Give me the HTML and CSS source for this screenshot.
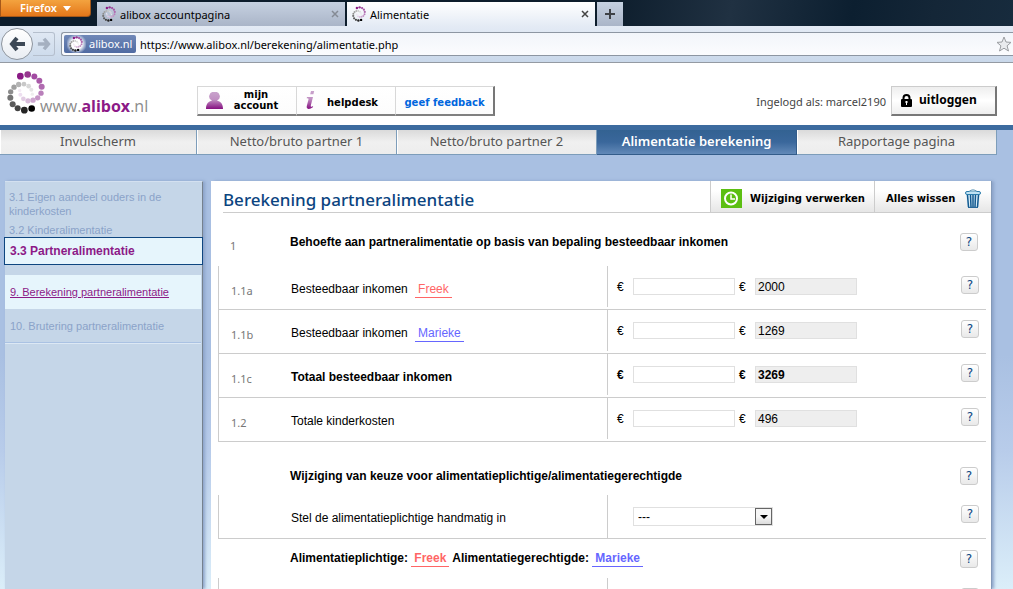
FILE: index.html
```html
<!DOCTYPE html>
<html lang="nl">
<head>
<meta charset="utf-8">
<title>Alimentatie</title>
<link rel="stylesheet" href="styles.css">
</head>
<body>
<svg class="defs" aria-hidden="true">
  <defs>
    <linearGradient id="purple" x1="0" y1="0" x2="0" y2="1"><stop offset="0" stop-color="#c9a3cc"/><stop offset=".45" stop-color="#c08fc2"/><stop offset="1" stop-color="#850f80"/></linearGradient>
    <symbol id="spiral" viewBox="20 18 114 128">
      <g>
        <circle cx="60" cy="33" r="10" fill="#8a1a85"/><circle cx="82" cy="28" r="10" fill="#97368f"/><circle cx="102" cy="34" r="9" fill="#a24ba1"/><circle cx="117" cy="47" r="9" fill="#a95aa8"/><circle cx="124" cy="65" r="9" fill="#b06bb0"/><circle cx="122" cy="84" r="8" fill="#b97fba"/><circle cx="112" cy="98" r="8" fill="#c596c6"/><circle cx="98" cy="105" r="8" fill="#cda6cf"/><circle cx="83" cy="107" r="8" fill="#d8bbda"/><circle cx="69" cy="101" r="7" fill="#e2cde4"/><circle cx="60" cy="89" r="6" fill="#eddff0"/><circle cx="58" cy="76" r="5" fill="#f4ecf5"/>
        <circle cx="94" cy="130" r="10" fill="#000"/><circle cx="72" cy="135" r="10" fill="#252525"/><circle cx="52" cy="129" r="9" fill="#444"/><circle cx="37" cy="117" r="9" fill="#5a5a5a"/><circle cx="30" cy="98" r="9" fill="#747474"/><circle cx="31" cy="80" r="8" fill="#8c8c8c"/><circle cx="41" cy="66" r="8" fill="#a0a0a0"/><circle cx="55" cy="58" r="8" fill="#b4b4b4"/><circle cx="71" cy="57" r="7" fill="#c8c8c8"/><circle cx="85" cy="63" r="7" fill="#d8d8d8"/><circle cx="93" cy="74" r="6" fill="#e4e4e4"/><circle cx="96" cy="87" r="5" fill="#eee"/>
      </g>
    </symbol>
  </defs>
</svg>

<div class="titlebar">
  <button class="firefox">Firefox <span class="caret"></span></button>
  <div class="tab"><svg class="favicon"><use href="#spiral"/></svg><span class="tab-name">alibox accountpagina</span><button class="close" aria-label="Sluiten"><svg viewBox="0 0 8 8"><path d="M1 1l6 6M7 1L1 7"/></svg></button></div>
  <div class="tab current"><svg class="favicon"><use href="#spiral"/></svg><span class="tab-name">Alimentatie</span><button class="close" aria-label="Sluiten"><svg viewBox="0 0 8 8"><path d="M1 1l6 6M7 1L1 7"/></svg></button></div>
  <button class="newtab" aria-label="Nieuw tabblad"><svg viewBox="0 0 10 10"><path d="M5 0v10M0 5h10"/></svg></button>
</div>

<div class="toolbar">
  <div class="history">
    <button class="back" aria-label="Terug"><svg viewBox="0 0 16 16"><path d="M8 2L3 8l5 6M3 8h13"/></svg></button>
    <button class="forward" aria-label="Vooruit"><svg viewBox="0 0 16 16"><path d="M8 2l5 6-5 6M13 8H1"/></svg></button>
  </div>
  <div class="address">
    <span class="identity"><span class="glow"><svg class="favicon"><use href="#spiral"/></svg></span>alibox.nl</span>
    <input class="url" type="text" aria-label="Adres" value="https://www.alibox.nl/berekening/alimentatie.php">
    <svg class="star" viewBox="0 0 16 16"><path d="M8 1l2 5 5 .4-3.900 3.400 1.400 5.200L8 12.200 3.500 15l1.400-5.200L1 6.400 6 6z"/></svg>
  </div>
</div>

<header class="header">
  <a class="logo" href="#"><svg class="logo-mark"><use href="#spiral"/></svg><span class="logo-text">www.<b>alibox</b>.nl</span></a>
  <div class="header-buttons">
    <button class="hbtn"><svg class="person" viewBox="0 0 17 17"><g fill="url(#purple)"><path d="M8.500 0a4.500 4.500 0 0 1 2.500 8.600c3.500 1 6 3 6 8.400H0c0-5.400 2.500-7.400 6-8.400A4.500 4.500 0 0 1 8.500 0z"/></g></svg><span class="two-lines">mijn account</span></button>
    <button class="hbtn"><svg class="info" viewBox="0 0 10 18"><path fill="url(#purple)" d="M6 0h3.200L8.400 3.300H5.200zM2 6h6L5.800 14.500q-.3 1.500 1 1.200l1.300-.8-.2 1.300Q5.500 18 3.500 17.900 1.200 17.500 1.800 15L3.600 8Q3.500 7 1.700 7.200z"/></svg><span class="one-line">helpdesk</span></button>
    <button class="hbtn feedback"><span>geef feedback</span></button>
  </div>
  <span class="user">Ingelogd als: marcel2190</span>
  <button class="logout"><svg viewBox="0 0 11 13"><path d="M2.500 6V4a3 3 0 0 1 6 0v2" fill="none" stroke="#000" stroke-width="2"/><rect y="5" width="11" height="8" rx="1"/><path d="M5.500 7v4M4 8h3" stroke="#fff"/></svg>uitloggen</button>
</header>

<nav class="nav">
  <a class="first" href="#">Invulscherm</a>
  <a href="#">Netto/bruto partner 1</a>
  <a href="#">Netto/bruto partner 2</a>
  <a class="active" href="#">Alimentatie berekening</a>
  <a href="#">Rapportage pagina</a>
</nav>

<div class="page">
  <aside class="sidebar">
    <a class="step" href="#">3.1 Eigen aandeel ouders in de kinderkosten</a>
    <a class="step" href="#">3.2 Kinderalimentatie</a>
    <a class="step chosen" href="#">3.3 Partneralimentatie</a>
    <a class="sub here" href="#">9. Berekening partneralimentatie</a>
    <a class="sub" href="#">10. Brutering partneralimentatie</a>
  </aside>

  <main class="panel">
    <div class="panel-head">
      <h1>Berekening partneralimentatie</h1>
      <button class="action process"><svg class="clock" viewBox="0 0 21 19"><rect width="21" height="19" fill="#5cbf12"/><circle cx="10" cy="9.500" r="6" fill="none" stroke="#fff" stroke-width="2"/><path d="M10 5.500v4.500h4" fill="none" stroke="#fff" stroke-width="1.500"/></svg>Wijziging verwerken</button>
      <button class="action wipe">Alles wissen<svg class="bin" viewBox="0 0 16 19"><path d="M1 5h14l-1.500 13.500h-11z" fill="#d7edf8"/><path d="M2.500 6l1 12M5.500 6l.5 12M8 6v12M10.500 6l-.5 12M13.500 6l-1 12" stroke="#13598f" stroke-width="1.500"/><path d="M3 18.400h10" stroke="#13598f"/><rect x=".5" y="2.500" width="15" height="3" rx="1.500" fill="#bfe2f3" stroke="#2c7cab"/><path d="M4 2.500Q8-.8 12 2.500" fill="#e4f4fa" stroke="#5c93b3"/></svg></button>
    </div>

    <div class="heading tall"><span class="num">1</span><h2>Behoefte aan partneralimentatie op basis van bepaling besteedbaar inkomen</h2><button class="help">?</button></div>
    <div class="row"><span class="num">1.1a</span><label class="label" for="a">Besteedbaar inkomen <span class="name freek">Freek</span></label>
      <div class="fields"><span class="euro">€</span><input id="a" type="text"><span class="euro">€</span><input type="text" aria-label="Berekend 1.1a" value="2000" readonly></div><button class="help">?</button></div>
    <div class="row"><span class="num">1.1b</span><label class="label" for="b">Besteedbaar inkomen <span class="name marieke">Marieke</span></label>
      <div class="fields"><span class="euro">€</span><input id="b" type="text"><span class="euro">€</span><input type="text" aria-label="Berekend 1.1b" value="1269" readonly></div><button class="help">?</button></div>
    <div class="row total"><span class="num">1.1c</span><label class="label" for="c">Totaal besteedbaar inkomen</label>
      <div class="fields"><span class="euro">€</span><input id="c" type="text"><span class="euro">€</span><input type="text" aria-label="Berekend 1.1c" value="3269" readonly></div><button class="help">?</button></div>
    <div class="row"><span class="num">1.2</span><label class="label" for="d">Totale kinderkosten</label>
      <div class="fields"><span class="euro">€</span><input id="d" type="text"><span class="euro">€</span><input type="text" aria-label="Berekend 1.2" value="496" readonly></div><button class="help">?</button></div>

    <div class="heading low"><span class="num"></span><h2>Wijziging van keuze voor alimentatieplichtige/alimentatiegerechtigde</h2><button class="help">?</button></div>
    <div class="row choice"><span class="num"></span><label class="label" for="plicht">Stel de alimentatieplichtige handmatig in</label>
      <div class="fields"><span class="euro"></span><span class="picker"><select id="plicht"><option>---</option></select><span class="drop"></span></span></div><button class="help">?</button></div>
    <div class="heading"><span class="num"></span><h2>Alimentatieplichtige: <span class="name freek">Freek</span> Alimentatiegerechtigde: <span class="name marieke">Marieke</span></h2><button class="help">?</button></div>
    <div class="row"><span class="num"></span><span class="label"></span><div class="fields"></div><button class="help" aria-label="Help"></button></div>
  </main>
</div>
</body>
</html>
```

FILE: styles.css
```css
* { box-sizing: border-box; }
body {
  margin: 0;
  height: 100vh;
  overflow: hidden;
  display: flex;
  flex-direction: column;
  background: #fff;
  font: 12px/14px "Liberation Sans", Arial, sans-serif;
  color: #000;
}
button { font: inherit; color: inherit; margin: 0; padding: 0; border: 0; background: none; }
a { text-decoration: none; color: inherit; }
svg { flex: none; }
.defs { position: absolute; width: 0; height: 0; }
.favicon { width: 14px; height: 16px; }

/* Browser frame */
.titlebar, .toolbar { flex: none; display: flex; font: 11px/16px "Noto Sans", "Open Sans", sans-serif; }
.titlebar {
  height: 26px;
  align-items: flex-end;
  gap: 2px;
  background: linear-gradient(100deg, #0d1d2c 0 60%, #203142 72%, #0c1f30 84%, #142637 92%, #172b3d);
}
.firefox {
  align-self: flex-start;
  width: 91px;
  height: 17px;
  margin-right: 4px;
  display: flex;
  align-items: center;
  justify-content: center;
  gap: 6px;
  color: #fff;
  font-weight: 600;
  background: linear-gradient(#f3a33f, #e4771a);
  border: 1px solid #a5581a;
  border-top: 0;
  border-radius: 0 0 4px 0;
}
.caret { border: 4px solid transparent; border-top: 5px solid #fff; border-bottom: 0; }
.tab {
  width: 248px;
  height: 24px;
  padding: 0 6px 0 5px;
  display: flex;
  align-items: center;
  gap: 4px;
  background: linear-gradient(#c6d1e1, #aab5c8);
}
.tab.current { background: linear-gradient(#fff, #e4ebf5); }
.tab-name { flex: 1; padding-top: 2px; }
.close { width: 8px; height: 8px; display: flex; }
.close svg { width: 8px; height: 8px; stroke: #858b95; stroke-width: 1.500; }
.current .close svg { stroke: #444; }
.newtab { width: 26px; height: 24px; display: grid; place-items: center; background: linear-gradient(#c6d1e1, #aab5c8); }
.newtab svg { width: 10px; height: 10px; stroke: #3e4146; stroke-width: 2; }
.toolbar {
  height: 37px;
  align-items: center;
  background: linear-gradient(#e4ebf5, #c9d8ea);
  border-bottom: 1px solid #949aa3;
}
.history { display: flex; align-items: center; padding-left: 1px; width: 61px; }
.back {
  width: 32px;
  height: 32px;
  display: grid;
  place-items: center;
  border: 1px solid #8e959e;
  border-radius: 50%;
  background: linear-gradient(#fff, #e9edf3);
}
.back svg, .forward svg { width: 16px; height: 16px; fill: none; stroke: #3c4856; stroke-width: 4; }
.forward {
  width: 22px;
  height: 24px;
  display: grid;
  place-items: center;
  border: 1px solid #b5bfcd;
  border-left: 0;
  border-radius: 0 3px 3px 0;
}
.forward svg { width: 14px; height: 14px; stroke: #a5b0c0; }
.address {
  flex: 1;
  height: 24px;
  display: flex;
  align-items: center;
  padding: 0 1px 0 2px;
  background: linear-gradient(#f2f5fa, #fbfcfe);
  border: 1px solid #8d96a2;
  border-right: 0;
  border-radius: 3px 0 0 3px;
}
.identity {
  width: 72px;
  height: 18px;
  display: flex;
  align-items: center;
  gap: 3px;
  padding-left: 3px;
  color: #fff;
  background: linear-gradient(#7088b8, #506ba2);
  border-radius: 2px;
}
.glow { display: flex; width: 19px; height: 18px; padding: 1px 2px; background: radial-gradient(#fff 40%, #7088b800 78%); }
.url { flex: 1; min-width: 0; border: 0; padding: 1px 4px 0; background: none; font: inherit; color: #000; }
.star { width: 16px; height: 16px; fill: #e9ebee; stroke: #9a9da1; }

/* Site header */
.header { flex: none; height: 62px; display: flex; align-items: center; padding-right: 16px; padding-top: 14px; padding-bottom: 1px; }
.logo { display: flex; width: 197px; padding-left: 7px; align-items: flex-end; margin-top: -16px; }
.logo-mark { width: 38px; height: 43px; margin-right: -5px; }
.logo-text { font: 16px/16px "Open Sans", sans-serif; color: #8b8b8b; }
.logo-text b { color: #8c1a87; }
.header-buttons { display: flex; font: bold 10px/11px "DejaVu Sans", Verdana, sans-serif; }
.hbtn {
  width: 100px;
  height: 30px;
  display: flex;
  align-items: center;
  gap: 7px;
  padding: 0 8px;
  margin-right: -1px;
  border: 1px solid #d8d8d8;
  border-right-color: #ccc;
  border-bottom: 2px solid #808080;
  background: linear-gradient(#fff, #fcfcfc);
}
.person { width: 17px; height: 17px; }
.info { width: 10px; height: 18px; }
.two-lines { flex: 1; padding-right: 6px; }
.one-line { flex: 1; padding: 4px 4px 0 0; }
.feedback { color: #06d; border-right: 2px solid #777; padding: 4px 0 0; justify-content: center; white-space: nowrap; }
.user { margin-left: auto; font: 11px/16px "Noto Sans", sans-serif; color: #444; padding-top: 2px; }
.logout {
  width: 106px;
  height: 30px;
  margin-left: 5px;
  display: flex;
  align-items: center;
  gap: 7px;
  padding-left: 9px;
  font: bold 12px/16px "Noto Sans", sans-serif;
  border: 1px solid #ccc;
  border-right: 2px solid #777;
  border-bottom: 2px solid #777;
  background: linear-gradient(#eee, #fff 50%, #eee);
}
.logout svg { width: 11px; height: 13px; }

.nav {
  flex: none;
  height: 30px;
  display: flex;
  padding-right: 16px;
  border-top: 5px solid #3c6b9f;
  background: #a9c0e2;
  font: 13px/23px "Noto Sans", sans-serif;
  color: #555;
}
.nav a {
  flex: 200;
  height: 25px;
  text-align: center;
  white-space: nowrap;
  border: 1px solid #7d9dba;
  border-width: 0 1px 1px 0;
  box-shadow: inset 1px 0 #fff;
  background: linear-gradient(#dadada, #f0f0f0 50%, #ededed);
}
.nav a.first { flex: 197; }
.nav a.active { color: #fff; font-weight: 600; background: linear-gradient(#336292, #3a679b 50%, #6289b8); border-color: #335c8a; box-shadow: none; }

/* Page body */
.page {
  flex: 1;
  min-height: 0;
  display: flex;
  gap: 8px;
  padding: 26px 22px 0 5px;
  background: linear-gradient(#a9c0e2 0 200px, #b8ccea 295px, #dbeef9 434px);
}
.sidebar {
  width: 198px;
  flex: none;
  padding-top: 8px;
  background: #c5d6e8;
  border-top: 1px solid #d3e0f0;
  border-right: 1px solid #75818e;
  box-shadow: 2px 0 3px #8ba2c8;
  color: #8ba3c9;
  font-size: 11px;
}
.step { display: block; padding: 0 30px 0 4px; margin-bottom: 5px; }
.step.chosen {
  margin: -5px -1px 10px;
  padding: 6px 5px;
  background: #e6f5fc;
  border: 1px solid #0e4680;
  color: #8c1a87;
  font-size: 12px;
  font-weight: bold;
}
.sub { display: block; padding: 10px 5px 9px; margin-right: 1px; border-bottom: 1px solid #aac2e3; box-shadow: 0 1px #dce8f4; }
.sub.here { padding: 10px 5px; background: #e6f5fc; border: 0; box-shadow: none; color: #8c1a87; text-decoration: underline; }

.panel { flex: 1; min-width: 0; background: #fff; box-shadow: 1px 0 #8399b8, 3px 0 3px #8ba2c8; }
.panel-head { display: flex; height: 32px; padding-left: 12px; }
h1 {
  flex: 1;
  margin: 0;
  border-bottom: 1px solid #ccc;
  font: 500 17px/38px "Noto Sans", sans-serif;
  color: #0b4480;
  white-space: nowrap;
}
.action {
  display: flex;
  align-items: center;
  border: 1px solid #ccc;
  border-width: 0 0 1px 1px;
  background: linear-gradient(#fff 30%, #e6e6e6);
  font: bold 10px/14px "DejaVu Sans", Verdana, sans-serif;
  white-space: nowrap;
  padding-top: 4px;
}
.process { width: 164px; padding-left: 10px; gap: 8px; }
.wipe { width: 117px; padding-left: 11px; gap: 10px; }
.clock { width: 21px; height: 19px; }
.bin { width: 16px; height: 19px; }

.heading, .row {
  display: grid;
  grid-template-columns: 72px minmax(0, 316fr) minmax(0, 354fr) 25px;
  margin: 0 5px 0 7px;
}
.heading { height: 39px; align-items: center; }
.heading.tall { height: 53px; padding-top: 5px; }
.heading.low { height: 53px; padding-top: 14px; }
.heading h2 { grid-column: 2 / 4; margin: 0; font-size: 12px; line-height: 16px; white-space: nowrap; }
.heading .help { margin-left: -1px; }
.row { height: 44px; border-left: 1px solid #ccc; border-bottom: 1px solid #ccc; }
.num { padding-left: 12px; font: 11px/14px "Noto Sans", sans-serif; color: #777; }
.row .num { padding-top: 18px; }
.tall .num { padding-top: 8px; }
.label { padding-top: 15px; line-height: 16px; }
.total .label, .total .euro { font-weight: bold; }
.name { display: inline-block; padding: 0 3px; line-height: 15px; border-bottom: 1px solid; }
.label .name { margin-left: 4px; }
.freek { color: #f66; }
.marieke { color: #66f; }
.fields { display: flex; align-items: center; height: 41px; border-left: 1px solid #ccc; }
.euro { width: 25px; padding-left: 9px; }
.fields input + .euro { width: 20px; padding-left: 4px; }
.fields input { width: 102px; height: 17px; padding: 0 2px; border: 1px solid #e0e0e0; font: 12px/15px "Liberation Sans", Arial, sans-serif; }
.fields input[readonly] { background: #eee; }
.total .fields input { font-weight: bold; }
.help {
  width: 18px;
  height: 18px;
  border: 1px solid #ccc;
  border-radius: 3px;
  background: linear-gradient(#fff, #e9e9e9);
  color: #0b4480;
  font: 12px/16px "DejaVu Sans", Verdana, sans-serif;
}
.row .help { margin-top: 10px; }
.choice .fields { height: 43px; }
.picker { position: relative; width: 140px; height: 19px; }
.picker select { appearance: none; display: block; width: 100%; height: 19px; padding: 0 4px; border: 1px solid #e0e0e0; border-radius: 0; background: #fff; color: #000; font: 12px/16px "Liberation Sans", Arial, sans-serif; }
.drop {
  position: absolute;
  top: 1px;
  right: 1px;
  width: 17px;
  height: 17px;
  display: grid;
  place-items: center;
  border: 1px solid #666;
  background: linear-gradient(#f6f6f6 50%, #dcdcdc);
  pointer-events: none;
}
.drop::after { content: ""; border: 4px solid transparent; border-top-color: #000; border-bottom: 0; }
```
